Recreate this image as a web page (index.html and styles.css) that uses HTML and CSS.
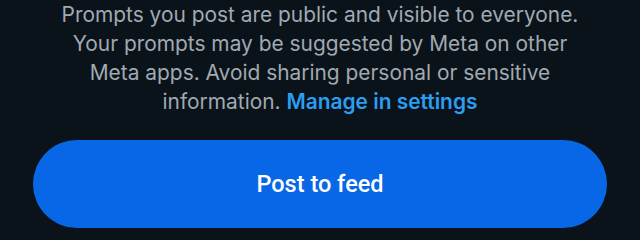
FILE: index.html
```html
<!DOCTYPE html>
<html lang="en">
<head>
<meta charset="utf-8">
<title>Post to feed</title>
<link rel="stylesheet" href="styles.css">
</head>
<body>
<main class="sheet">
  <p class="notice">Prompts you post are public and visible to everyone. Your prompts may be suggested by Meta on other Meta apps. Avoid sharing personal or sensitive information. <a class="link" href="#">Manage in settings</a></p>
  <button class="post-btn" type="button">Post to feed</button>
</main>
</body>
</html>
```
FILE: styles.css
```css
html, body {
  margin: 0;
  padding: 0;
  background: #0a131a;
}
.sheet {
  display: flex;
  flex-direction: column;
  align-items: stretch;
  gap: 24px;
  padding: 0 33px;
}
.notice {
  margin: 0 auto;
  max-width: 540px;
  text-align: center;
  font-family: Inter, "Noto Sans", sans-serif;
  font-size: 20.9px;
  line-height: 29px;
  color: #a1a9b1;
}
.link {
  color: #2b9ef2;
  font-weight: 600;
  text-decoration: none;
}
.post-btn {
  flex: none;
  height: 88px;
  border: 0;
  border-radius: 44px;
  background: #0867e6;
  color: #ffffff;
  font-family: Roboto, Inter, sans-serif;
  font-weight: 500;
  font-size: 23.5px;
  padding: 0;
}
```
